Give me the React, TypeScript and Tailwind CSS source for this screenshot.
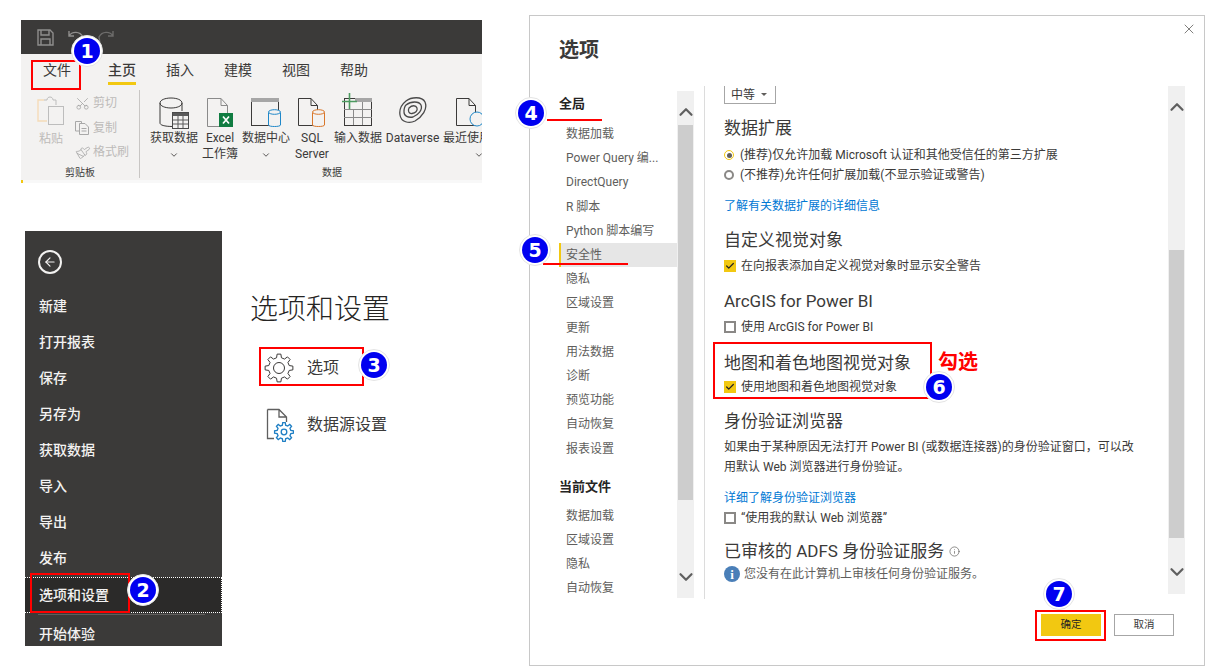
import React from "react";
import { Scissors, Paintbrush, ChevronUp, ChevronDown, X, Check, ArrowLeft, Info } from "lucide-react";

function gearPath(cx: number, cy: number, outer: number, inner: number, teeth = 8) {
  const pts: string[] = [];
  const step = (Math.PI * 2) / teeth;
  for (let i = 0; i < teeth; i++) {
    const a = i * step - Math.PI / 2;
    const offs: [number, number][] = [
      [-0.3, inner],
      [-0.17, outer],
      [0.17, outer],
      [0.3, inner],
    ];
    for (const [o, r] of offs) {
      const t = a + o * step;
      pts.push(`${(cx + r * Math.cos(t)).toFixed(2)} ${(cy + r * Math.sin(t)).toFixed(2)}`);
    }
  }
  return "M" + pts.join("L") + "Z";
}

function Badge({ n, className }: { n: number; className: string }) {
  return (
    <div className={"absolute flex h-8 w-8 items-center justify-center rounded-full border border-[#e4e4e4] bg-white " + className}>
      <div className="flex h-[26px] w-[26px] items-center justify-center rounded-full bg-[#0000f0] font-[DejaVu_Sans,sans-serif] text-[19px] font-bold leading-none text-white">
        {n}
      </div>
    </div>
  );
}

function Doc({ stroke = "#6e6e6e", w = 20, h = 30 }: { stroke?: string; w?: number; h?: number }) {
  return <path d={`M0.5 0.5H${w - 7}L${w - 0.5} 7.5V${h - 0.5}H0.5Z M${w - 7} 0.5V7.5H${w - 0.5}`} fill="none" stroke={stroke} />;
}

function IconGet() {
  return (
    <svg width="30" height="32" viewBox="0 0 30 32">
      <path d="M1 6V26C1 28 5 29.5 14 29.5" fill="none" stroke="#3b3a39" />
      <path d="M1 6C1 3 6 1 12 1S23 3 23 6V14" fill="none" stroke="#3b3a39" />
      <path d="M1 6C1 9 6 11 12 11S23 9 23 6" fill="none" stroke="#3b3a39" />
      <rect x="13.5" y="15.5" width="16" height="16" fill="#f3f2f1" stroke="#4a4a4a" />
      <rect x="14" y="16" width="15" height="3" fill="#5a5a5a" />
      <path d="M19 19V31M24 19V31M14 23H29M14 27H29" stroke="#5a5a5a" />
    </svg>
  );
}

function IconExcel() {
  return (
    <svg width="28" height="32" viewBox="0 0 28 32">
      <g transform="translate(1 1)"><Doc stroke="#8a8a8a" w={21} h={29} /></g>
      <rect x="13" y="16" width="14" height="14" fill="#107c41" />
      <path d="M17 19.5L23 26.5M23 19.5L17 26.5" stroke="#fff" strokeWidth="1.7" />
    </svg>
  );
}

function IconHub() {
  return (
    <svg width="32" height="32" viewBox="0 0 32 32">
      <rect x="1.5" y="1.5" width="27" height="27" fill="none" stroke="#3b3a39" />
      <rect x="1" y="1" width="28" height="4" fill="#a6a6a6" />
      <path d="M18.5 15.5V28C18.5 30 30.5 30 30.5 28V15.5" fill="#f3f2f1" stroke="#1f88c9" />
      <ellipse cx="24.5" cy="15" rx="6" ry="2.3" fill="#f3f2f1" stroke="#1f88c9" />
    </svg>
  );
}

function IconSql() {
  return (
    <svg width="30" height="32" viewBox="0 0 30 32">
      <g transform="translate(1 1)"><Doc stroke="#3b3a39" w={20} h={28} /></g>
      <path d="M15.5 15.5V28C15.5 30 27.5 30 27.5 28V15.5" fill="#f3f2f1" stroke="#d9772b" />
      <ellipse cx="21.5" cy="15" rx="6" ry="2.3" fill="#f3f2f1" stroke="#d9772b" />
    </svg>
  );
}

function IconEnter() {
  return (
    <svg width="34" height="36" viewBox="0 0 34 36" className="-mt-1">
      <rect x="3.5" y="5.5" width="27" height="27" fill="none" stroke="#3b3a39" />
      <rect x="14" y="5" width="17" height="4" fill="#a6a6a6" />
      <path d="M12.5 16V32M21.5 9V32M3 16.5H31M3 24.5H31" stroke="#8a8a8a" />
      <path d="M8.5 0V16M1 8.5H16" stroke="#4c9a5f" strokeWidth="1.6" />
    </svg>
  );
}

function IconDataverse() {
  return (
    <svg width="30" height="28" viewBox="0 0 30 28">
      <path d="M8 4C13 0 24 -1 27 5C30 12 24 20 17 24C11 27 3 25 2 18C1 12 3 8 8 4Z" fill="none" stroke="#4a4a4a" strokeWidth="1.3" />
      <path d="M8 8C13 4 21 4 23 8C25 13 20 18 15 20C10 21 6 19 6 15C6 12 6 10 8 8Z" fill="none" stroke="#4a4a4a" strokeWidth="1.3" />
      <path d="M11 11C14 8 18 8 19 11C20 14 17 16 14 16.5C11 17 9.5 14 11 11Z" fill="none" stroke="#4a4a4a" strokeWidth="1.3" />
    </svg>
  );
}

function IconRecent() {
  return (
    <svg width="48" height="32" viewBox="0 0 48 32">
      <g transform="translate(1 1)"><Doc stroke="#3b3a39" w={20} h={28} /></g>
      <circle cx="22" cy="22" r="7" fill="#f3f2f1" stroke="#1f88c9" />
    </svg>
  );
}

function RibbonItem({ w, icon, l1, l2, chevron }: { w: string; icon: React.ReactNode; l1: string; l2?: string; chevron?: boolean }) {
  return (
    <div className={"flex shrink-0 flex-col items-center " + w}>
      <div className="flex h-[33px] items-start justify-center">{icon}</div>
      <div className="whitespace-nowrap text-[12px] leading-4 text-[#3b3a39]">{l1}</div>
      {l2 && <div className="whitespace-nowrap text-[12px] leading-4 text-[#3b3a39]">{l2}</div>}
      {chevron && <ChevronDown size={10} strokeWidth={2} className="mt-[4px] text-[#3b3a39]" />}
    </div>
  );
}

function Ribbon() {
  const tabs = ["主页", "插入", "建模", "视图", "帮助"];
  return (
    <div className="w-[461px] overflow-hidden">
      <div className="flex h-[34px] items-center gap-[14px] bg-[#3b3a39] pl-[16px] text-[#8f8e8d]">
        <svg width="17" height="17" viewBox="0 0 17 17" fill="none" stroke="currentColor" strokeWidth="1.4">
          <path d="M1 1H13L16 4V16H1Z M4 1V6H12V1 M4 16V10H13V16" />
        </svg>
        <svg width="16" height="14" viewBox="0 0 16 14" fill="none" stroke="currentColor" strokeWidth="1.4">
          <path d="M1 1V6H6 M1 6C4 1 12 1 15 7L14 13" />
        </svg>
        <svg width="16" height="14" viewBox="0 0 16 14" fill="none" stroke="#6d6c6b" strokeWidth="1.4">
          <path d="M15 1V6H10 M15 6C12 1 4 1 1 7L2 13" />
        </svg>
      </div>
      <div className="bg-[#f3f2f1]">
        <div className="flex h-[32px] pl-[22px] pt-[6px]">
          <div className="w-[28px] text-[14px] leading-5 text-[#3b3a39]">文件</div>
          <div className="ml-[37px] flex gap-[30px]">
            {tabs.map((t, i) => (
              <div key={t} className="flex w-[28px] flex-col items-center">
                <span className={"text-[14px] leading-5 text-[#3b3a39] " + (i === 0 ? "font-medium" : "")}>{t}</span>
                {i === 0 && <div className="mt-[2px] h-[3px] w-[28px] bg-[#f2c811]" />}
              </div>
            ))}
          </div>
        </div>
        <div className="flex h-[94px] pt-[4px]">
          <div className="h-[88px] w-[119px] shrink-0 border-r border-[#c8c6c4]">
            <div className="flex h-[75px] text-[#bdbbb9]">
              <div className="ml-[16px] flex w-[28px] flex-col items-center pt-[6px]">
                <svg width="28" height="29" viewBox="0 0 28 29" fill="none" className="shrink-0">
                  <path d="M7 4H1V25H10" stroke="#f5dcb8" strokeWidth="1.4" />
                  <path d="M7 4H10C10 0 16 0 16 4H19V9" stroke="#bdbdbd" />
                  <rect x="11.5" y="10.5" width="15" height="18" fill="#f3f2f1" stroke="#bdbdbd" />
                </svg>
                <span className="mt-[6px] whitespace-nowrap text-[12px] leading-4">粘贴</span>
              </div>
              <div className="ml-[10px] flex flex-col gap-[8.5px] pt-[5px]">
                <div className="flex h-4 items-center gap-[3px]">
                  <Scissors size={15} strokeWidth={1.2} className="-rotate-90 text-[#a0a0a0]" />
                  <span className="text-[12px] leading-4">剪切</span>
                </div>
                <div className="flex h-4 items-center gap-[3px]">
                  <svg width="15" height="15" viewBox="0 0 15 15" fill="none" stroke="#a8a8a8">
                    <path d="M0.5 1.5H6.5V3 M0.5 1.5V11H4 M4.5 3.5H10L13.5 7V14.5H4.5Z M6.5 8.5H11.5M6.5 11H11.5" />
                  </svg>
                  <span className="text-[12px] leading-4">复制</span>
                </div>
                <div className="flex h-4 items-center gap-[3px]">
                  <Paintbrush size={15} strokeWidth={1.2} className="rotate-[10deg] text-[#a8a8a8]" />
                  <span className="whitespace-nowrap text-[12px] leading-4">格式刷</span>
                </div>
              </div>
            </div>
            <div className="text-center text-[10px] leading-4 text-[#3b3a39]">剪贴板</div>
          </div>
          <div className="w-[384px] shrink-0">
            <div className="flex h-[75px] pl-[10px] pt-[7px]">
              <RibbonItem w="w-[48px]" icon={<IconGet />} l1="获取数据" chevron />
              <RibbonItem w="w-[44px]" icon={<IconExcel />} l1="Excel" l2="工作簿" />
              <RibbonItem w="w-[48px]" icon={<IconHub />} l1="数据中心" chevron />
              <RibbonItem w="w-[44px]" icon={<IconSql />} l1="SQL" l2="Server" />
              <RibbonItem w="w-[48px]" icon={<IconEnter />} l1="输入数据" />
              <RibbonItem w="w-[61px]" icon={<IconDataverse />} l1="Dataverse" />
              <RibbonItem w="w-[72px]" icon={<IconRecent />} l1="最近使用的源" chevron />
            </div>
            <div className="text-center text-[10px] leading-4 text-[#3b3a39]">数据</div>
          </div>
        </div>
      </div>
      <div className="flex h-[3px] bg-[#f8f8f8]">
        <div className="w-[2px] bg-[#f2c811]" />
      </div>
    </div>
  );
}

function Backstage() {
  const rows = ["新建", "打开报表", "保存", "另存为", "获取数据", "导入", "导出", "发布"];
  return (
    <div className="ml-[4px] mt-[48px] flex">
      <div className="h-[415px] w-[197px] shrink-0 overflow-hidden bg-[#3b3a39] text-[14px] font-medium text-[#f3f2f1]">
        <div className="h-[57px] pl-[13px] pt-[19px]">
          <div className="flex h-6 w-6 items-center justify-center rounded-full border-2 border-[#f3f2f1]">
            <ArrowLeft size={14} strokeWidth={2} />
          </div>
        </div>
        {rows.map((r) => (
          <div key={r} className="flex h-9 items-center pl-[14px]">{r}</div>
        ))}
        <div className="mt-[1px] flex h-9 items-center border-y border-r border-dotted border-white bg-[#2b2a29] pl-[14px]">选项和设置</div>
        <div className="mx-[13px] mt-[1px] h-px w-[167px] bg-[#605e5c]" />
        <div className="mt-[1px] flex h-9 items-center pl-[14px]">开始体验</div>
      </div>
      <div className="pl-[28px] pt-[61px] text-[#3b3a39]">
        <div className="whitespace-nowrap text-[28px] font-light leading-9 text-[#252423]">选项和设置</div>
        <div className="ml-[14px] mt-[21px] flex h-[38px] items-center gap-[13px]">
          <svg width="30" height="30" viewBox="0 0 30 30" fill="none" stroke="#3b3a39" strokeWidth="1">
            <path d={gearPath(15, 15, 14, 10.5)} />
            <circle cx="15" cy="15" r="5.5" />
          </svg>
          <span className="text-[16px]">选项</span>
        </div>
        <div className="ml-[14px] mt-[19px] flex h-[38px] items-center gap-[13px]">
          <svg width="30" height="34" viewBox="0 0 30 34" fill="none">
            <path d="M3.5 1.5H15L22.5 9V14 M15 1.5V9H22.5 M3.5 1.5V30.5H10" stroke="#5f5f5f" strokeWidth="1.3" />
            <path d={gearPath(20, 24, 9.5, 7)} stroke="#1f7fc4" strokeWidth="1.3" />
            <circle cx="20" cy="24" r="2.8" stroke="#1f7fc4" strokeWidth="1.3" />
          </svg>
          <span className="whitespace-nowrap text-[16px]">数据源设置</span>
        </div>
      </div>
    </div>
  );
}

function Chevrons() {
  return (
    <>
      <ChevronUp size={22} strokeWidth={2.4} className="absolute left-[-2.5px] top-[10px] text-[#5f5f5f]" />
      <ChevronDown size={22} strokeWidth={2.4} className="absolute left-[-2.5px] top-[475px] text-[#5f5f5f]" />
    </>
  );
}

function Box({ checked }: { checked?: boolean }) {
  return checked ? (
    <span className="flex h-3 w-3 shrink-0 items-center justify-center bg-[#f2c811]">
      <Check size={10} strokeWidth={3} className="text-[#252423]" />
    </span>
  ) : (
    <span className="h-3 w-3 shrink-0 border-2 border-[#8a8886] bg-white" />
  );
}

function CheckRow({ checked, text, className }: { checked?: boolean; text: string; className: string }) {
  return (
    <div className={"flex h-5 items-center gap-[5px] text-[12px] text-[#3b3a39] " + className}>
      <Box checked={checked} />
      <span className="whitespace-nowrap">{text}</span>
    </div>
  );
}

function Heading({ children, className }: { children: React.ReactNode; className: string }) {
  return <div className={"h-6 whitespace-nowrap text-[17px] leading-6 text-[#3b3a39] " + className}>{children}</div>;
}

function NavList() {
  const a = ["数据加载", "Power Query 编...", "DirectQuery", "R 脚本", "Python 脚本编写", "安全性", "隐私", "区域设置", "更新", "用法数据", "诊断", "预览功能", "自动恢复", "报表设置"];
  const b = ["数据加载", "区域设置", "隐私", "自动恢复"];
  const item = "flex h-[24.2px] items-center whitespace-nowrap pl-[7px] text-[12px] text-[#605e5c]";
  return (
    <div className="h-[507px] w-[118px] shrink-0 overflow-hidden">
      <div className="flex h-[26px] items-center text-[13px] font-bold text-[#252423]">全局</div>
      <div className="mt-[5px]">
        {a.map((t) => (
          <div key={t} className={t === "安全性" ? item + " border-l-2 border-[#f2c811] !pl-[5px] bg-[#e6e6e6]" : item}>{t}</div>
        ))}
      </div>
      <div className="mt-[13px] flex h-[26px] items-center text-[13px] font-bold text-[#252423]">当前文件</div>
      <div className="mt-[4px]">
        {b.map((t) => (
          <div key={t} className={item}>{t}</div>
        ))}
      </div>
    </div>
  );
}

function Content() {
  return (
    <div className="h-[513px] flex-1 overflow-hidden border-l border-[#dcdcdc] pl-[19px]">
      <div className="flex h-[18px] w-[52px] items-center gap-[6px] border-x border-b border-[#a6a6a6] pl-[6px] text-[12px] text-[#3b3a39]">
        中等
        <span className="h-0 w-0 border-x-[3px] border-t-[3px] border-x-transparent border-t-[#605e5c]" />
      </div>
      <Heading className="mt-3">数据扩展</Heading>
      <div className="mt-[5px] flex h-5 items-center gap-[6px] whitespace-nowrap text-[12px] text-[#3b3a39]">
        <span className="flex h-[10px] w-[10px] shrink-0 items-center justify-center rounded-full border border-[#f2c811]">
          <span className="h-[5px] w-[5px] rounded-full bg-[#605e5c]" />
        </span>
        (推荐)仅允许加载 Microsoft 认证和其他受信任的第三方扩展
      </div>
      <div className="flex h-5 items-center gap-[6px] whitespace-nowrap text-[12px] text-[#3b3a39]">
        <span className="h-[10px] w-[10px] shrink-0 rounded-full border-2 border-[#8a8886]" />
        (不推荐)允许任何扩展加载(不显示验证或警告)
      </div>
      <div className="mt-[11px] h-5 text-[12px] leading-5 text-[#0078d4]">了解有关数据扩展的详细信息</div>
      <Heading className="mt-3">自定义视觉对象</Heading>
      <CheckRow checked text="在向报表添加自定义视觉对象时显示安全警告" className="mt-[4px]" />
      <Heading className="mt-[13px]">ArcGIS for Power BI</Heading>
      <CheckRow text="使用 ArcGIS for Power BI" className="mt-[4px]" />
      <Heading className="mt-[14px]">地图和着色地图视觉对象</Heading>
      <CheckRow checked text="使用地图和着色地图视觉对象" className="mt-[2px]" />
      <Heading className="mt-[12px]">身份验证浏览器</Heading>
      <div className="mt-1 whitespace-nowrap text-[12px] leading-5 text-[#3b3a39]">
        如果由于某种原因无法打开 Power BI (或数据连接器)的身份验证窗口，可以改
        <br />
        用默认 Web 浏览器进行身份验证。
      </div>
      <div className="mt-[11px] h-5 text-[12px] leading-5 text-[#0078d4]">详细了解身份验证浏览器</div>
      <CheckRow text="“使用我的默认 Web 浏览器”" className="" />
      <Heading className="mt-[11px] flex items-center gap-[5px]">
        已审核的 ADFS 身份验证服务
        <Info size={11} strokeWidth={1.5} className="text-[#605e5c]" />
      </Heading>
      <div className="mt-[1px] flex h-5 items-center gap-[4px] whitespace-nowrap text-[12px] text-[#605e5c]">
        <span className="flex h-4 w-4 shrink-0 items-center justify-center rounded-full bg-[#4a7fb8] font-[Liberation_Serif,serif] text-[13px] font-bold leading-none text-white">i</span>
        您没有在此计算机上审核任何身份验证服务。
      </div>
    </div>
  );
}

function Dialog() {
  return (
    <div className="relative mt-[15px] h-[651px] w-[676px] shrink-0 border border-[#c8c8c8] bg-white">
      <X size={16} strokeWidth={1.2} className="absolute right-[7px] top-[5px] text-[#605e5c]" />
      <div className="flex h-[70px] items-start pl-[29px] pt-[20px] text-[20px] font-bold leading-7 text-[#3b3a39]">选项</div>
      <div className="flex h-[513px]">
        <div className="ml-[29px] mt-[5px] flex">
          <NavList />
          <div className="relative">
            <div className="flex h-[507px] w-[17px] flex-col items-center bg-[#f0f0f0]">
              <div className="mt-[34px] h-[375px] w-[15px] bg-[#cdcdcd]" />
            </div>
            <Chevrons />
          </div>
        </div>
        <div className="ml-[10px] flex flex-1">
          <Content />
          <div className="relative mr-[19px]">
            <div className="flex h-[508px] w-[17px] shrink-0 flex-col items-center bg-[#f0f0f0]">
              <div className="mt-[164px] h-[288px] w-[15px] shrink-0 bg-[#cdcdcd]" />
            </div>
            <Chevrons />
          </div>
        </div>
      </div>
      <div className="flex justify-end gap-[13px] pr-[30px] pt-[15px]">
        <div className="flex h-[22px] w-[60px] items-center justify-center bg-[#f2c811] text-[10.5px] text-[#252423]">确定</div>
        <div className="flex h-[22px] w-[60px] items-center justify-center border border-[#a6a6a6] text-[10.5px] text-[#3b3a39]">取消</div>
      </div>
    </div>
  );
}

export default function App() {
  return (
    <div className="relative flex h-[666px] w-[1223px] overflow-hidden bg-white font-[Roboto,Noto_Sans_CJK_SC,sans-serif]">
      <div className="w-[529px] shrink-0 pl-[21px] pt-[20px]">
        <Ribbon />
        <Backstage />
      </div>
      <Dialog />

      <div className="absolute left-[31px] top-[60px] h-[30px] w-[50px] border-2 border-[#ff0000]" />
      <div className="absolute left-[30px] top-[573px] h-[40px] w-[100px] border-2 border-[#ff0000]" />
      <div className="absolute left-[259px] top-[347px] h-[39px] w-[105px] border-2 border-[#ff0000]" />
      <div className="absolute left-[713px] top-[342px] h-[57px] w-[219px] border-2 border-[#ff0000]" />
      <div className="absolute left-[1035px] top-[610px] h-[31px] w-[71px] border-2 border-[#ff0000]" />
      <div className="absolute left-[547px] top-[119px] h-[2px] w-[55px] bg-[#ff0000]" />
      <div className="absolute left-[543px] top-[263px] h-[2px] w-[85px] bg-[#ff0000]" />
      <div className="absolute left-[938px] top-[348px] whitespace-nowrap text-[20px] font-bold leading-7 text-[#ff0000]">勾选</div>

      <Badge n={1} className="left-[71px] top-[35px]" />
      <Badge n={2} className="left-[127px] top-[574px]" />
      <Badge n={3} className="left-[358px] top-[349px]" />
      <Badge n={4} className="left-[515px] top-[97px]" />
      <Badge n={5} className="left-[519px] top-[234px]" />
      <Badge n={6} className="left-[923px] top-[371px]" />
      <Badge n={7} className="left-[1043px] top-[578px]" />
    </div>
  );
}
